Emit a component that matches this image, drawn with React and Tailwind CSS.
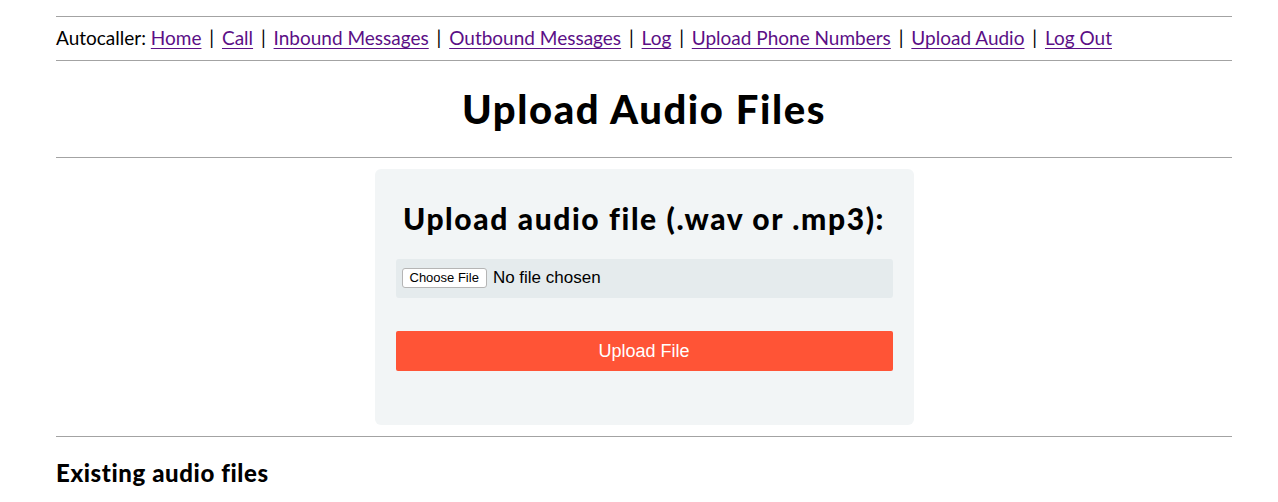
import React from 'react'

const links = ['Home', 'Call', 'Inbound Messages', 'Outbound Messages', 'Log', 'Upload Phone Numbers', 'Upload Audio', 'Log Out']

export default function App() {
    return (
        <div className="min-h-screen bg-white text-black font-['Lato','Noto_Sans',sans-serif]">
            <div className="ml-[56px] w-[1176px] pt-[16px]">
                <hr className="border-t border-[#a3a3a3]" />
                <nav className="h-[43px] flex items-center text-[19px] whitespace-pre">
                    <span>Autocaller: </span>
                    {links.map((l, i) => (
                        <span key={l} className="flex items-center">
                            <a href="#" className="text-[#5b0f86] underline underline-offset-[3px]">{l}</a>
                            {i < links.length - 1 && <span className="mx-[3px]"> | </span>}
                        </span>
                    ))}
                </nav>
                <hr className="border-t border-[#a3a3a3]" />
                <h1 className="h-[96px] flex items-center justify-center text-[40px] font-black tracking-[1.6px]">Upload Audio Files</h1>
                <hr className="border-t border-[#a3a3a3]" />

                <div className="flex justify-center pt-[11px] pb-[11px]">
                    <div className="w-[539px] h-[256px] rounded-[6px] bg-[#f2f5f6] px-[21px] pt-[29px]">
                        <h2 className="text-center text-[30px] font-black tracking-[1.6px] leading-[40px] whitespace-nowrap">Upload audio file (.wav or .mp3):</h2>
                        <div className="mt-[21px] h-[39px] rounded-[3px] bg-[#e5ebed] flex items-center pl-[6px] gap-[6px] pb-[2px] font-['Liberation_Sans',sans-serif]">
                            <span className="h-[20px] px-[7px] flex items-center bg-white border border-[#b5b5b5] rounded-[3px] text-[13px] leading-none">Choose File</span>
                            <span className="text-[17px]">No file chosen</span>
                        </div>
                        <button className="mt-[33px] w-full h-[40px] rounded-[2px] bg-[#ff5436] text-white text-[18px] font-['Liberation_Sans',sans-serif]">Upload File</button>
                    </div>
                </div>

                <hr className="border-t border-[#a3a3a3]" />
                <h3 className="mt-[18px] text-[24px] font-black tracking-[0.6px]">Existing audio files</h3>
            </div>
        </div>
    )
}
